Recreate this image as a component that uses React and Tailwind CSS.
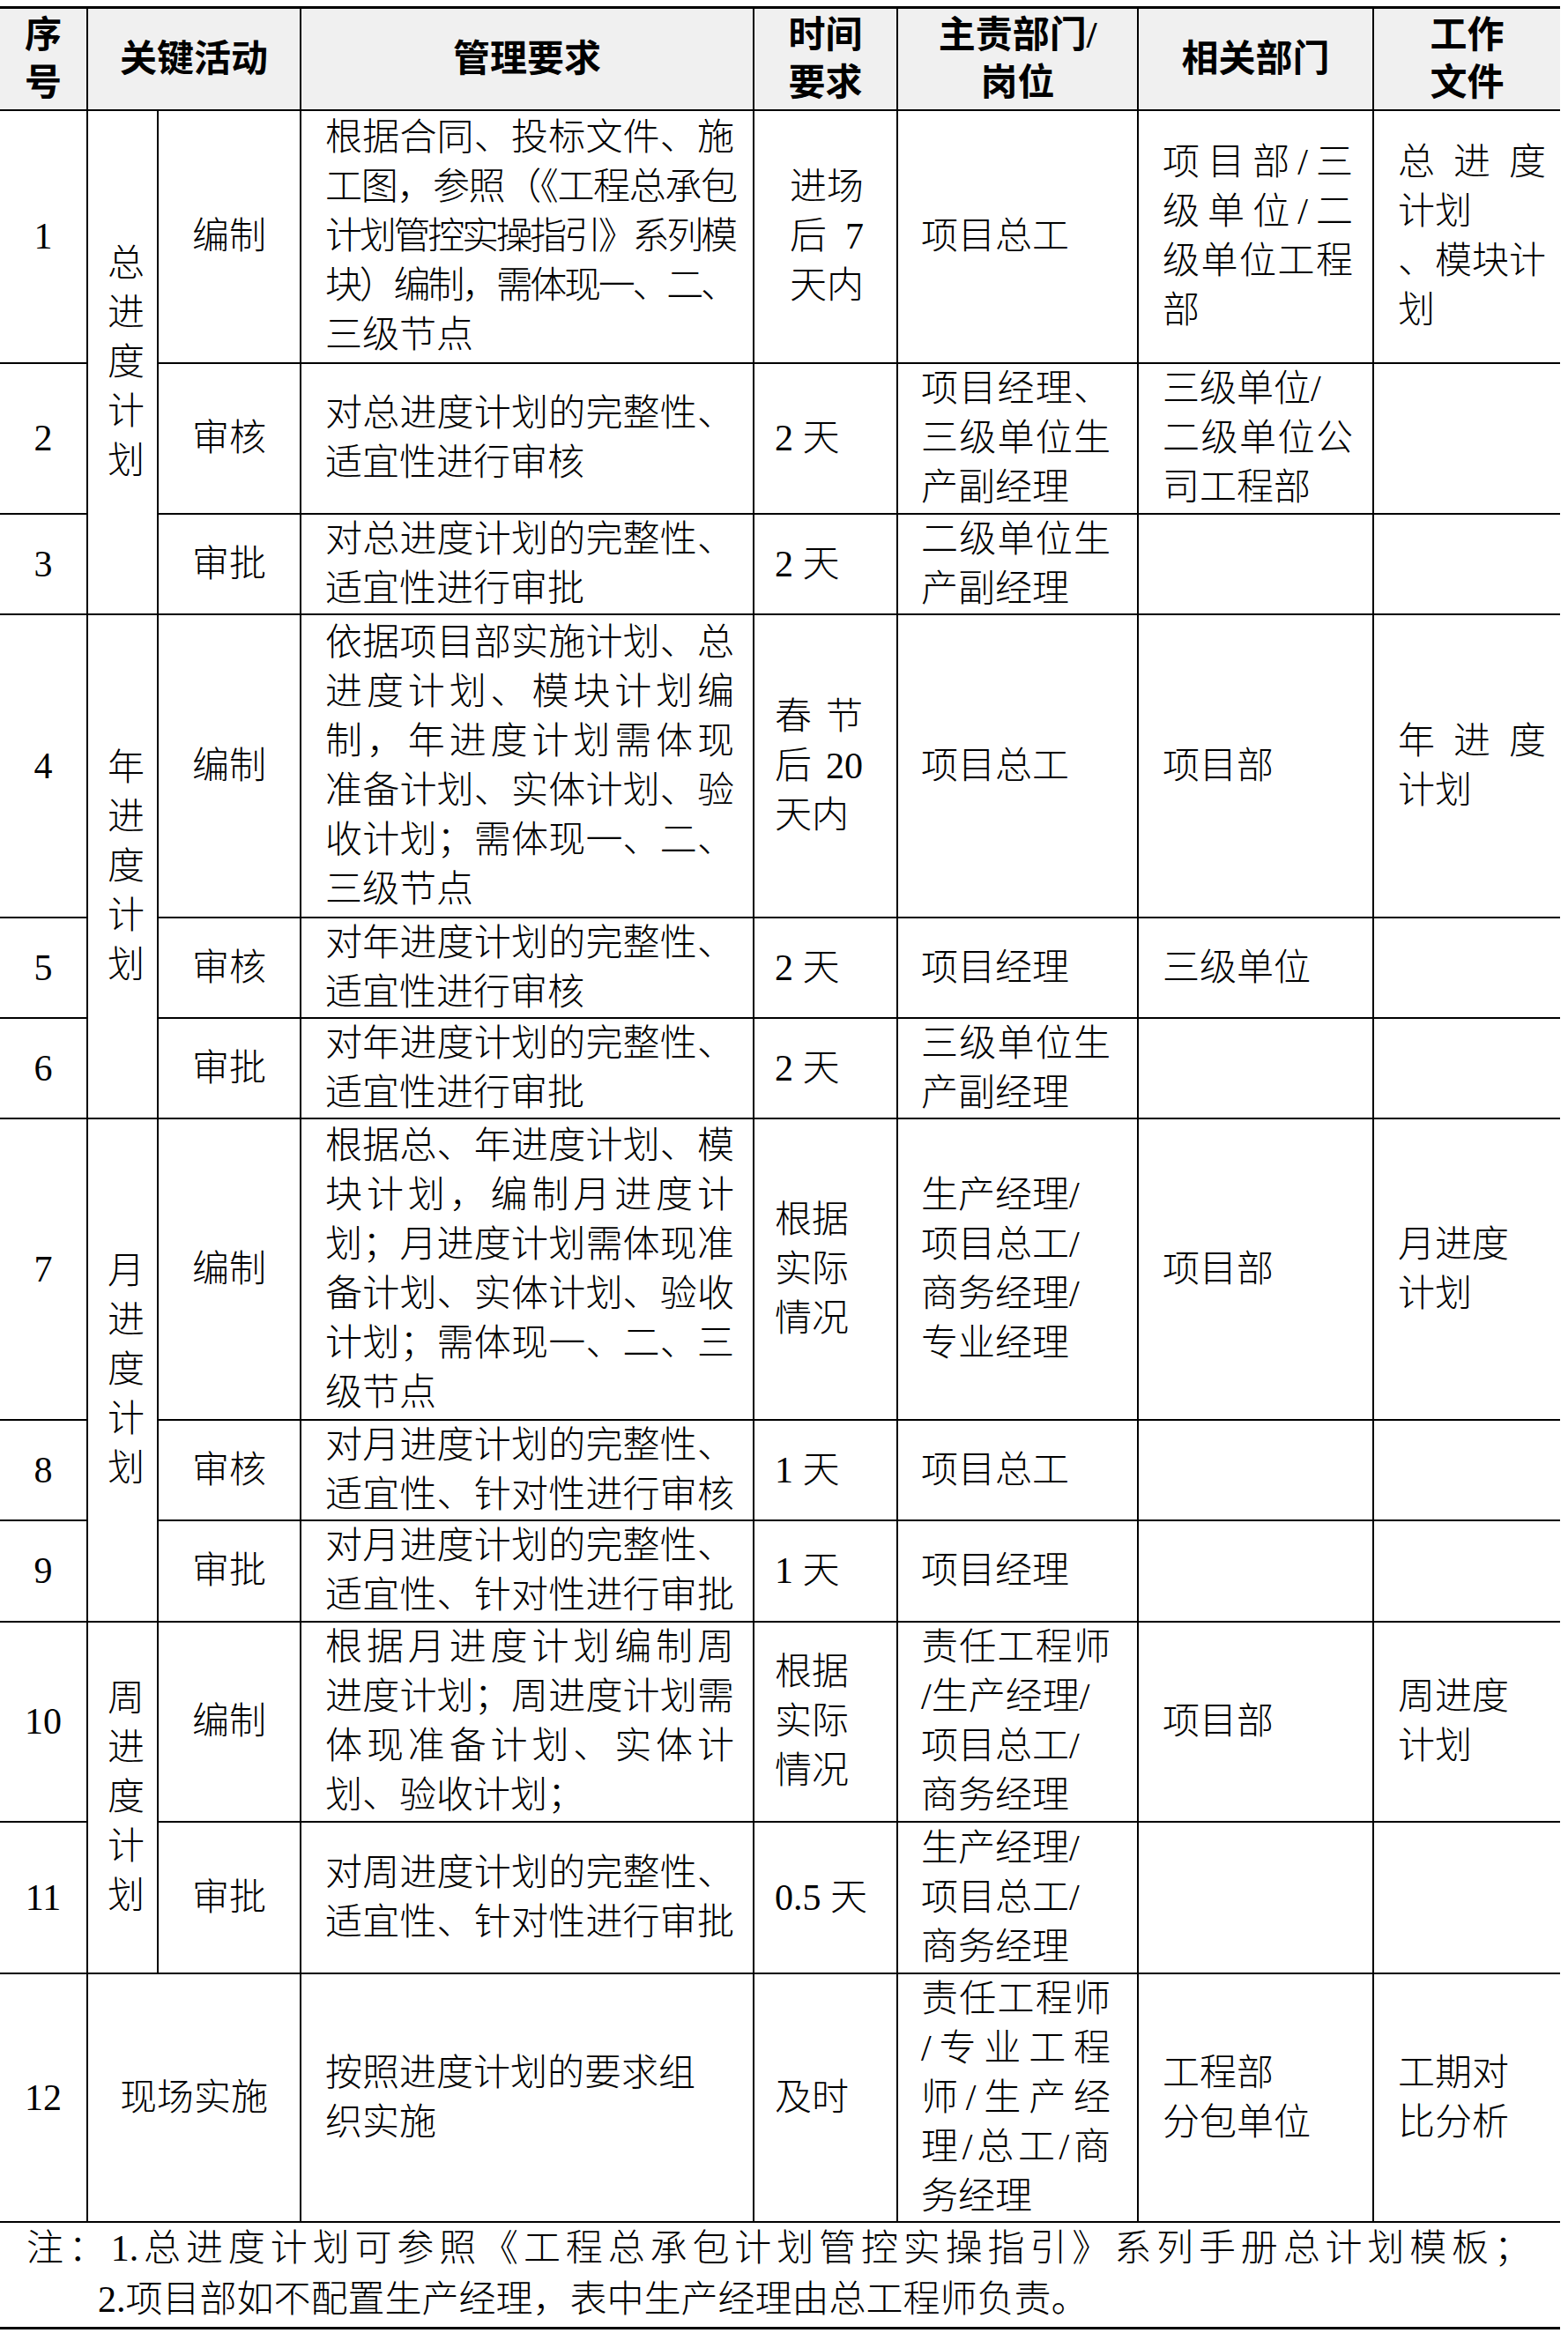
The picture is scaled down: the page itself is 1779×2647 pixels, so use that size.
import clsx from 'clsx';

const ROWS = [
  {
    n: '1', h: 'h-[287px]', group: '总进度计划', span: 3, act: '编制',
    req: [['根据合同、投标文件、施', 1], ['工图，参照（《工程总承包', 1, 1], ['计划管控实操指引》系列模', 1, 1], ['块）编制，需体现一、二、', 1, 1], ['三级节点']],
    time: [['进场', 1], ['后 7', 1], ['天内']], timeBox: 'ml-[40px] w-[84px]',
    owner: [['项目总工']],
    rel: [['项目部/三', 1], ['级单位/二', 1], ['级单位工程', 1], ['部']],
    doc: [['总进度', 1], ['计划'], ['、模块计', 1], ['划']],
  },
  {
    n: '2', h: 'h-[171px]', act: '审核',
    req: [['对总进度计划的完整性、', 1], ['适宜性进行审核']],
    time: [['2 天']],
    owner: [['项目经理、', 1], ['三级单位生', 1], ['产副经理']],
    rel: [['三级单位/'], ['二级单位公', 1], ['司工程部']],
  },
  {
    n: '3', h: 'h-[114px]', act: '审批',
    req: [['对总进度计划的完整性、', 1], ['适宜性进行审批']],
    time: [['2 天']],
    owner: [['二级单位生', 1], ['产副经理']],
  },
  {
    n: '4', h: 'h-[344px]', group: '年进度计划', span: 3, act: '编制',
    req: [['依据项目部实施计划、总', 1], ['进度计划、模块计划编', 1], ['制，年进度计划需体现', 1], ['准备计划、实体计划、验', 1], ['收计划；需体现一、二、', 1], ['三级节点']],
    time: [['春节', 1], ['后 20', 1], ['天内']],
    owner: [['项目总工']],
    rel: [['项目部']],
    doc: [['年进度', 1], ['计划']],
  },
  {
    n: '5', h: 'h-[114px]', act: '审核',
    req: [['对年进度计划的完整性、', 1], ['适宜性进行审核']],
    time: [['2 天']],
    owner: [['项目经理']],
    rel: [['三级单位']],
  },
  {
    n: '6', h: 'h-[113px]', act: '审批',
    req: [['对年进度计划的完整性、', 1], ['适宜性进行审批']],
    time: [['2 天']],
    owner: [['三级单位生', 1], ['产副经理']],
  },
  {
    n: '7', h: 'h-[342px]', group: '月进度计划', span: 3, act: '编制',
    req: [['根据总、年进度计划、模', 1], ['块计划，编制月进度计', 1], ['划；月进度计划需体现准', 1], ['备计划、实体计划、验收', 1], ['计划；需体现一、二、三', 1], ['级节点']],
    time: [['根据'], ['实际'], ['情况']],
    owner: [['生产经理/'], ['项目总工/'], ['商务经理/'], ['专业经理']],
    rel: [['项目部']],
    doc: [['月进度'], ['计划']],
  },
  {
    n: '8', h: 'h-[112px]', act: '审核',
    req: [['对月进度计划的完整性、', 1], ['适宜性、针对性进行审核', 1]],
    time: [['1 天']],
    owner: [['项目总工']],
  },
  {
    n: '9', h: 'h-[115px]', act: '审批',
    req: [['对月进度计划的完整性、', 1], ['适宜性、针对性进行审批', 1]],
    time: [['1 天']],
    owner: [['项目经理']],
  },
  {
    n: '10', h: 'h-[227px]', group: '周进度计划', span: 2, act: '编制',
    req: [['根据月进度计划编制周', 1], ['进度计划；周进度计划需', 1], ['体现准备计划、实体计', 1], ['划、验收计划；']],
    time: [['根据'], ['实际'], ['情况']],
    owner: [['责任工程师', 1], ['/生产经理/'], ['项目总工/'], ['商务经理']],
    rel: [['项目部']],
    doc: [['周进度'], ['计划']],
  },
  {
    n: '11', h: 'h-[172px]', act: '审批',
    req: [['对周进度计划的完整性、', 1], ['适宜性、针对性进行审批', 1]],
    time: [['0.5 天']],
    owner: [['生产经理/'], ['项目总工/'], ['商务经理']],
  },
  {
    n: '12', h: 'h-[281px]', full: '现场实施',
    req: [['按照进度计划的要求组'], ['织实施']],
    time: [['及时']],
    owner: [['责任工程师', 1], ['/专业工程', 1], ['师/生产经', 1], ['理/总工/商', 1], ['务经理']],
    rel: [['工程部'], ['分包单位']],
    doc: [['工期对'], ['比分析']],
  },
];

const cell = 'border-2 border-black p-0 align-middle';

function Lines({ lines = [], box }) {
  return (
    <div className={box}>
      {lines.map(([t, justify, tight], i) => (
        <div
          key={i}
          className={clsx('whitespace-nowrap', justify && '[text-align-last:justify]', tight && 'tracking-[-4px]')}
        >
          {t}
        </div>
      ))}
    </div>
  );
}

function Vertical({ text }) {
  return (
    <div className="flex flex-col items-center pl-[8px]">
      {text.split('').map((c, i) => <div key={i}>{c}</div>)}
    </div>
  );
}

export default function App() {
  return (
    <div className="bg-white pt-[7px] pb-[8px] text-black text-[42px] leading-[56px] font-['Liberation_Serif','Noto_Sans_CJK_SC',serif]">
      <table className="w-[1770px] table-fixed border-collapse">
        <colgroup>
          <col className="w-[99px]" />
          <col className="w-[80px]" />
          <col className="w-[162px]" />
          <col className="w-[514px]" />
          <col className="w-[163px]" />
          <col className="w-[273px]" />
          <col className="w-[267px]" />
          <col className="w-[212px]" />
        </colgroup>
        <thead>
          <tr className="h-[116px] bg-[#f0f0f0] text-center leading-[54px]">
            <th className={clsx(cell, 'border-l-0 border-t-[3px] font-semibold')}>序<br />号</th>
            <th colSpan={2} className={clsx(cell, 'border-t-[3px] font-semibold')}>关键活动</th>
            <th className={clsx(cell, 'border-t-[3px] font-semibold')}>管理要求</th>
            <th className={clsx(cell, 'border-t-[3px] font-semibold')}>时间<br />要求</th>
            <th className={clsx(cell, 'border-t-[3px] font-semibold')}>主责部门/<br />岗位</th>
            <th className={clsx(cell, 'border-t-[3px] font-semibold')}>相关部门</th>
            <th className={clsx(cell, 'border-r-0 border-t-[3px] font-semibold')}>工作<br />文件</th>
          </tr>
        </thead>
        <tbody className="font-light">
          {ROWS.map((r) => (
            <tr key={r.n} className={r.h}>
              <td className={clsx(cell, 'border-l-0 text-center')}>{r.n}</td>
              {r.full && <td colSpan={2} className={clsx(cell, 'text-center')}>{r.full}</td>}
              {r.group && (
                <td rowSpan={r.span} className={cell}>
                  <Vertical text={r.group} />
                </td>
              )}
              {r.act && <td className={clsx(cell, 'text-center')}>{r.act}</td>}
              <td className={cell}><Lines lines={r.req} box="ml-[27px] w-[464px]" /></td>
              <td className={cell}><Lines lines={r.time} box={r.timeBox || 'ml-[23px] w-[100px]'} /></td>
              <td className={cell}><Lines lines={r.owner} box="ml-[26px] w-[215px]" /></td>
              <td className={cell}><Lines lines={r.rel} box="ml-[27px] w-[216px]" /></td>
              <td className={clsx(cell, 'border-r-0')}><Lines lines={r.doc} box="ml-[27px] w-[168px]" /></td>
            </tr>
          ))}
        </tbody>
      </table>
      <div className="w-[1770px] border-b-[3px] border-black pb-[2px] font-light leading-[58px]">
        <div className="ml-[30px] w-[1707px] whitespace-nowrap [text-align-last:justify]">
          注：1.总进度计划可参照《工程总承包计划管控实操指引》系列手册总计划模板；
        </div>
        <div className="ml-[111px] whitespace-nowrap">2.项目部如不配置生产经理，表中生产经理由总工程师负责。</div>
      </div>
    </div>
  );
}
